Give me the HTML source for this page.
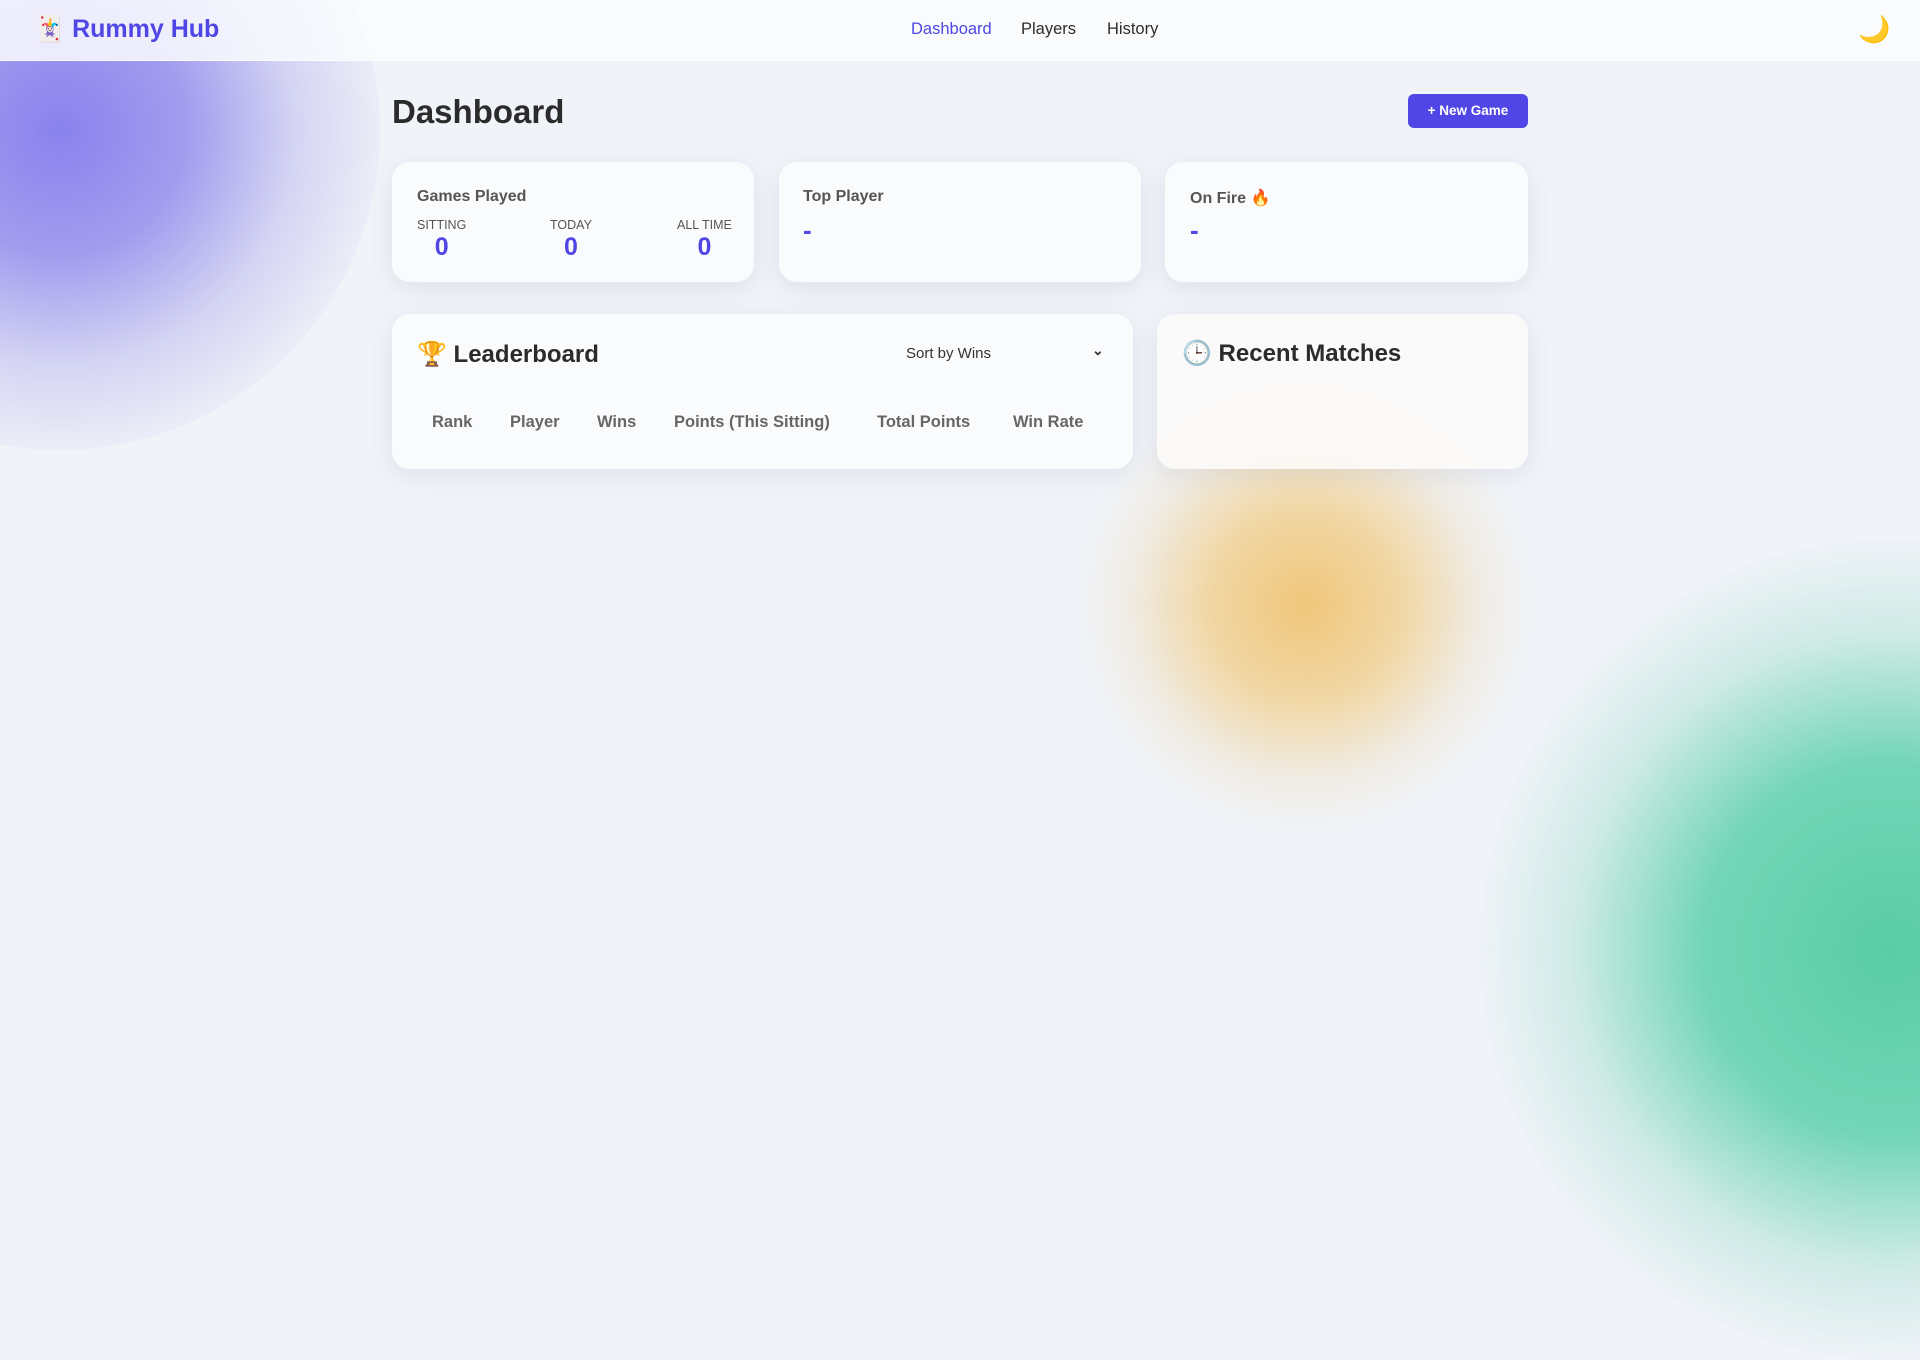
<!DOCTYPE html>
<html><head><meta charset="utf-8"><style>
*{box-sizing:border-box;margin:0;padding:0}
body{width:1920px;height:1080px;overflow:hidden;background:#f0f3f8;font-family:"Liberation Sans","Noto Sans CJK SC",sans-serif;position:relative;color:#2d2d2d}
.blob{position:absolute;border-radius:50%}
.b1{left:-260px;top:-190px;width:640px;height:640px;background:radial-gradient(circle,rgba(120,110,235,.85) 0%,rgba(130,120,235,.7) 28%,rgba(160,155,235,.35) 52%,rgba(240,243,248,0) 75%)}
.b2{left:1080px;top:380px;width:450px;height:450px;background:radial-gradient(circle,rgba(240,190,100,.85) 0%,rgba(242,200,120,.65) 30%,rgba(240,215,170,.25) 55%,rgba(240,243,248,0) 72%)}
.b3{left:1480px;top:540px;width:820px;height:820px;background:radial-gradient(circle,rgba(90,205,165,1) 0%,rgba(100,210,175,.9) 32%,rgba(150,220,200,.35) 55%,rgba(240,243,248,0) 72%)}
nav{position:absolute;left:0;top:0;width:1920px;height:61px;background:rgba(250,251,254,.85);border-bottom:1px solid rgba(255,255,255,.8)}
.logo{position:absolute;left:34px;top:15px;font-size:25px;font-weight:bold;color:#4f46e5}
.links a{position:absolute;top:20px;font-size:16.5px;color:#2d2d2d;text-decoration:none}
.moon{position:absolute;left:1858px;top:14px;font-size:26px}
h1{position:absolute;left:392px;top:93px;font-size:33px;font-weight:bold;color:#2b2b2b}
.btn{position:absolute;left:1408px;top:94px;width:120px;height:34px;background:#4f46e5;color:#fff;border-radius:6px;font-size:13.5px;font-weight:bold;text-align:center;line-height:34px}
.card{position:absolute;background:rgba(250,251,253,.95);border-radius:18px;box-shadow:0 6px 24px rgba(100,110,140,.12)}
.lbl{position:absolute;font-size:16px;font-weight:bold;color:#555}
.sub{position:absolute;font-size:12.5px;color:#555;text-align:center}
.sub b{display:block;font-size:25px;color:#4f46e5;margin-top:1px}
.dash{position:absolute;font-size:26px;font-weight:bold;color:#4f46e5}
.th{position:absolute;top:413px;font-size:16.5px;font-weight:bold;color:#666}
.h2{position:absolute;font-size:24px;font-weight:bold;color:#2b2b2b}
</style></head><body>
<div class="blob b1"></div><div class="blob b2"></div><div class="blob b3"></div>
<nav><div class="logo">🃏 Rummy Hub</div>
<div class="links"><a style="left:911px;color:#4f46e5">Dashboard</a><a style="left:1021px">Players</a><a style="left:1107px">History</a></div>
<div class="moon">🌙</div></nav>
<h1>Dashboard</h1>
<div class="btn">+ New Game</div>
<div class="card" style="left:392px;top:162px;width:362px;height:120px"></div>
<div class="card" style="left:779px;top:162px;width:362px;height:120px"></div>
<div class="card" style="left:1165px;top:162px;width:363px;height:120px"></div>
<div class="lbl" style="left:417px;top:188px">Games Played</div>
<div class="sub" style="left:417px;top:218px">SITTING<b>0</b></div>
<div class="sub" style="left:550px;top:218px">TODAY<b>0</b></div>
<div class="sub" style="left:677px;top:218px">ALL TIME<b>0</b></div>
<div class="lbl" style="left:803px;top:188px">Top Player</div>
<div class="dash" style="left:803px;top:215px">-</div>
<div class="lbl" style="left:1190px;top:188px">On Fire 🔥</div>
<div class="dash" style="left:1190px;top:215px">-</div>
<div class="card" style="left:392px;top:314px;width:741px;height:155px"></div>
<div class="card" style="left:1157px;top:314px;width:371px;height:155px;background:rgba(252,251,249,.88)"></div>
<div class="h2" style="left:417px;top:340px">🏆 Leaderboard</div>
<div style="position:absolute;left:906px;top:345px;font-size:15px;color:#333">Sort by Wins</div>
<div style="position:absolute;left:1092px;top:342px;font-size:14px;color:#333;font-weight:bold">⌄</div>
<div class="th" style="left:432px">Rank</div>
<div class="th" style="left:510px">Player</div>
<div class="th" style="left:597px">Wins</div>
<div class="th" style="left:674px">Points (This Sitting)</div>
<div class="th" style="left:877px">Total Points</div>
<div class="th" style="left:1013px">Win Rate</div>
<div class="h2" style="left:1182px;top:339px">🕒 Recent Matches</div>
</body></html>
